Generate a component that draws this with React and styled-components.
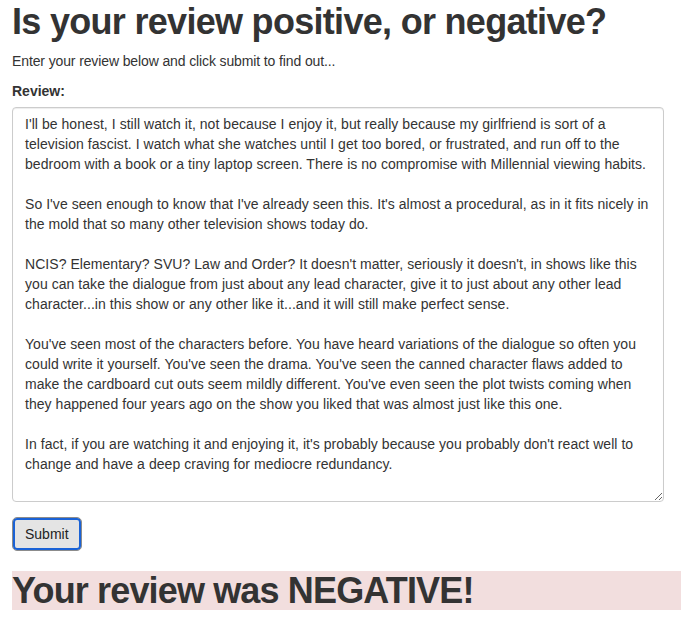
import React from 'react'
import styled, { createGlobalStyle } from 'styled-components'

const GlobalStyle = createGlobalStyle`
    html, body {
        margin: 0;
        padding: 0;
        background: #fff;
    }

    body {
        font-family: "Liberation Sans", Arial, Helvetica, sans-serif;
        font-size: 14px;
        line-height: 1.42857;
        color: #333;
    }

    * {
        box-sizing: border-box;
    }
`

const review = [
    "I'll be honest, I still watch it, not because I enjoy it, but really because my girlfriend is sort of a",
    "television fascist. I watch what she watches until I get too bored, or frustrated, and run off to the",
    "bedroom with a book or a tiny laptop screen. There is no compromise with Millennial viewing habits.",
    "",
    "So I've seen enough to know that I've already seen this. It's almost a procedural, as in it fits nicely in",
    "the mold that so many other television shows today do.",
    "",
    "NCIS? Elementary? SVU? Law and Order? It doesn't matter, seriously it doesn't, in shows like this",
    "you can take the dialogue from just about any lead character, give it to just about any other lead",
    "character...in this show or any other like it...and it will still make perfect sense.",
    "",
    "You've seen most of the characters before. You have heard variations of the dialogue so often you",
    "could write it yourself. You've seen the drama. You've seen the canned character flaws added to",
    "make the cardboard cut outs seem mildly different. You've even seen the plot twists coming when",
    "they happened four years ago on the show you liked that was almost just like this one.",
    "",
    "In fact, if you are watching it and enjoying it, it's probably because you probably don't react well to",
    "change and have a deep craving for mediocre redundancy.",
].join('\n')

function App() {
    return (
        <>
            <GlobalStyle />
            <Page>
                <Title>Is your review positive, or negative?</Title>
                <Intro>Enter your review below and click submit to find out...</Intro>
                <form onSubmit={(e) => e.preventDefault()}>
                    <Group>
                        <Label htmlFor="review">Review:</Label>
                        <ReviewBox id="review" wrap="off" defaultValue={review} />
                    </Group>
                    <SubmitButton type="submit">Submit</SubmitButton>
                </form>
                <Result>Your review was NEGATIVE!</Result>
            </Page>
        </>
    )
}

export default App

const Page = styled.div`
    padding: 0 0 0 12px;
`

const Title = styled.h1`
    font-size: 36px;
    font-weight: 700;
    line-height: 1.1;
    letter-spacing: -0.7px;
    margin: 2px 0 10px;
    color: #333;
`

const Intro = styled.p`
    margin: 0 0 10px;
    letter-spacing: -0.12px;
`

const Group = styled.div`
    display: flex;
    flex-direction: column;
    align-items: flex-start;
    margin-bottom: 15px;
`

const Label = styled.label`
    font-weight: 700;
    margin-bottom: 5px;
`

const ReviewBox = styled.textarea`
    display: block;
    width: 652px;
    height: 395px;
    padding: 6px 12px;
    font-family: inherit;
    font-size: 14px;
    line-height: 20px;
    letter-spacing: 0.05px;
    color: #333;
    background: #fff;
    border: 1px solid #ccc;
    border-radius: 4px;
    box-shadow: inset 0 1px 1px rgba(0, 0, 0, 0.075);
    overflow: hidden;
    outline: none;
`

const SubmitButton = styled.button`
    display: block;
    height: 34px;
    padding: 6px 12px;
    font-family: inherit;
    font-size: 14px;
    line-height: 20px;
    color: #222;
    background: #e4e4e4;
    border: 1px solid #8c8c8c;
    border-radius: 5px;
    box-shadow: inset 0 0 0 2px #1a62d6;
    cursor: pointer;
`

const Result = styled.h1`
    font-size: 36px;
    font-weight: 700;
    line-height: 1.1;
    letter-spacing: -0.85px;
    margin: 20px 0 10px;
    background: #f2dede;
    color: #333;
`
